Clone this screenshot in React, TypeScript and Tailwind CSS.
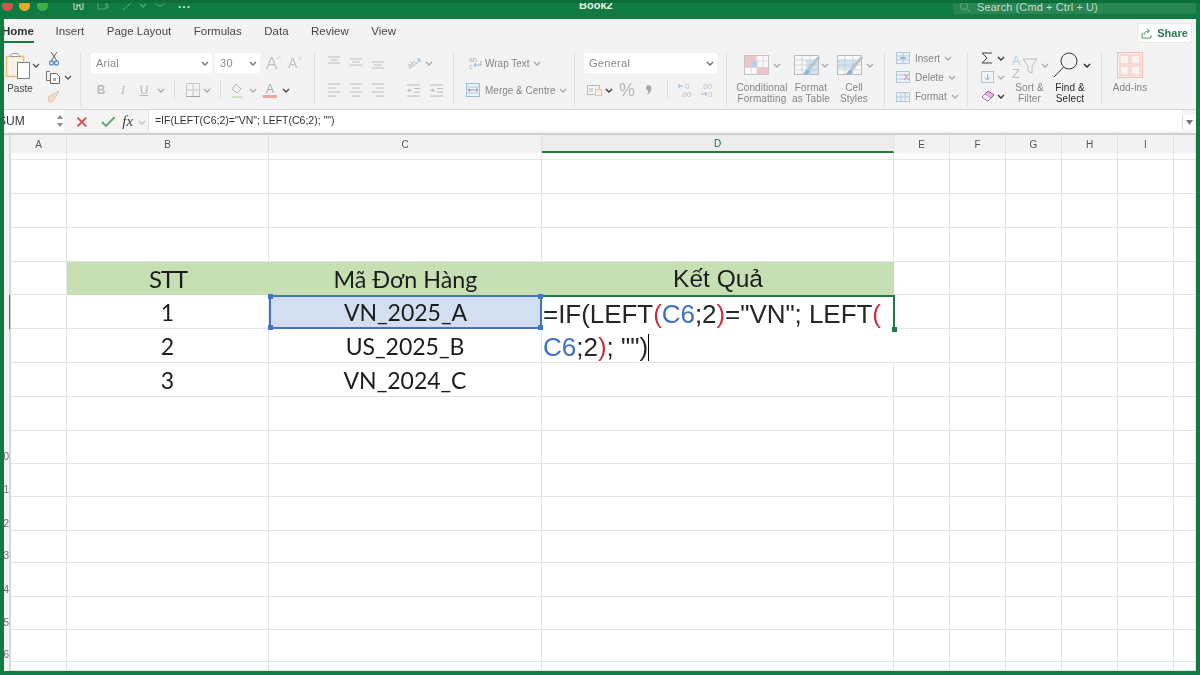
import React from "react";

const Chev = ({ c = "#a8a8a8", className = "" }: { c?: string; className?: string }) => (
  <svg width="8" height="5" viewBox="0 0 8 5" className={`shrink-0 ${className}`}>
    <path d="M1 1l3 3 3-3" fill="none" stroke={c} strokeWidth="1.3" />
  </svg>
);

const Sep = ({ className = "" }: { className?: string }) => <div className={`w-px h-[18px] bg-[#dcdcdc] ${className}`} />;

const Lines = ({ v, h }: { v: "t" | "m" | "b" | "n"; h: "l" | "c" | "r" }) => {
  const ys = v === "t" ? [1, 4, 7] : v === "m" ? [3, 6, 9] : v === "b" ? [6, 9, 12] : [1, 5, 9, 13];
  const xs: Record<string, [number, number][]> = {
    l: [[0, 12], [0, 8], [0, 12], [0, 8]],
    c: [[0, 12], [2, 10], [0, 12], [2, 10]],
    r: [[0, 12], [4, 12], [0, 12], [4, 12]],
  };
  return (
    <svg width="12" height="14" viewBox="0 0 12 14" className="shrink-0">
      {ys.map((y, i) => (
        <line key={i} x1={xs[h][i][0]} x2={xs[h][i][1]} y1={y} y2={y} stroke="#bcbcbc" strokeWidth="1" />
      ))}
    </svg>
  );
};

const Indent = ({ out }: { out?: boolean }) => (
  <svg width="13" height="13" viewBox="0 0 13 13" className="shrink-0">
    <path d="M0 1h13M7 4.500h6M7 8h6M0 12h13" stroke="#bcbcbc" strokeWidth="1" />
    <path d={out ? "M5 6.200H1M2.500 4.500L1 6.200 2.500 8" : "M0 6.200h4M2.500 4.500L4 6.200 2.500 8"} stroke="#9db8d4" strokeWidth="1" fill="none" />
  </svg>
);

const Label = ({ children, className = "" }: { children: React.ReactNode; className?: string }) => (
  <div className={`text-[10px] leading-[10.5px] tracking-[0.1px] text-center text-[#858585] whitespace-nowrap ${className}`}>{children}</div>
);

const TableIcon = ({ cell }: { cell?: boolean }) => (
  <svg width="26" height="21" viewBox="0 0 26 21" className="shrink-0">
    <rect x="0.500" y="0.500" width="24" height="19" fill="#fafafa" stroke="#b5bcc2" />
    {cell ? <rect x="1" y="5" width="18" height="9" fill="#cfe3f5" /> : <rect x="12" y="5" width="12" height="14" fill="#cfe3f5" />}
    <path d="M0 5h25M0 10h25M0 15h25M8 0v20M16 0v20" stroke="#c4c9cd" strokeWidth="0.800" />
    <path d="M25 2L14 15" stroke="#b9c3ca" strokeWidth="3" />
    <path d="M13 14l3 3-3 3-4-1z" fill="#8fb5d6" />
  </svg>
);

const TABS = ["Insert", "Page Layout", "Formulas", "Data", "Review", "View"];

const COLS = ["", "A", "B", "C", "D", "E", "F", "G", "H", "I", ""];
const ROW_H = [7, 34, 34, 34, 33, 34, 34, 34, 34, 33, 33, 34, 32, 34, 33, 32, 9];
const ROW_NO = ["", "", "", "", "", "", "", "", "", "10", "11", "12", "13", "14", "15", "16", ""];

const TABLE: Record<number, [string, string, string]> = {
  4: ["STT", "Mã Đơn Hàng", "Kết Quả"],
  5: ["1", "VN_2025_A", ""],
  6: ["2", "US_2025_B", ""],
  7: ["3", "VN_2024_C", ""],
};

const Handle = ({ className }: { className: string }) => (
  <span className={`absolute w-[5px] h-[5px] z-20 ${className}`} />
);

function Grid() {
  const cells: React.ReactNode[] = [];
  ROW_H.forEach((_, r) => {
    COLS.forEach((_, c) => {
      const key = `${r}-${c}`;
      if (r === 6 && c === 4) return;
      if (c === 0) {
        cells.push(
          <div key={key} className="relative bg-[#f5f5f5] border-r-2 border-[#d9d4da] flex items-end justify-end pb-[1px] text-[10px] leading-[12px] text-[#6e6e6e] font-['Liberation_Sans',sans-serif]">
            {ROW_NO[r]}
            {r === 5 && <span className="absolute right-[-1px] top-0 h-full w-[1.5px] bg-[#2f7a52]" />}
          </div>
        );
        return;
      }
      const base = "border-b border-r border-[#e4e4e4]";
      if (r === 4 && c >= 2 && c <= 4) {
        const kq = c === 4;
        cells.push(
          <div key={key} className={`bg-[#c6e0b4] flex items-center justify-center pt-[1px] text-[#1c1c1c] ${kq ? "font-['Liberation_Sans',sans-serif] text-[24.5px]" : c === 2 ? "font-['Lato',sans-serif] text-[24px] tracking-[-1.2px]" : "font-['Lato',sans-serif] text-[23.3px]"}`}>
            {TABLE[r][c - 2]}
          </div>
        );
        return;
      }
      if (r === 5 && c === 3) {
        cells.push(
          <div key={key} className="relative bg-[#d3dff1] border-2 border-[#4472c4] flex items-center justify-center pt-[1px] text-[23px] text-[#1c1c1c] font-['Lato',sans-serif]">
            {TABLE[r][1]}
            <Handle className="left-[-3px] top-[-3px] bg-[#4472c4]" />
            <Handle className="left-[-3px] bottom-[-3px] bg-[#4472c4]" />
            <Handle className="right-[-3px] top-[-3px] bg-[#4472c4]" />
            <Handle className="right-[-3px] bottom-[-3px] bg-[#4472c4]" />
          </div>
        );
        return;
      }
      if (r === 5 && c === 4) {
        cells.push(
          <div key={key} className="row-span-2 relative bg-white border-t-2 border-[#1f7a47] border-b border-b-[#e4e4e4] pt-[1px] pl-[1px] text-[26px] leading-[33px] text-[#262626] font-['Liberation_Sans',sans-serif] whitespace-nowrap z-10">
            <div className="h-[33px] tracking-[-0.05px]">
              =IF(LEFT<span className="text-[#c2343e]">(</span><span className="text-[#3f6fc4]">C6</span>;2<span className="text-[#c2343e]">)</span>="VN"; LEFT<span className="text-[#c2343e]">(</span>
            </div>
            <div className="flex h-[33px] items-center">
              <span>
                <span className="text-[#3f6fc4]">C6</span>;2<span className="text-[#c2343e]">)</span>; "")
              </span>
              <span className="w-px h-[27px] bg-black" />
            </div>
            <span className="absolute right-[-1px] top-[-2px] h-[35px] w-[2px] bg-[#1f7a47]" />
            <span className="absolute right-[-3px] top-[30px] w-[5px] h-[5px] bg-[#1f7a47]" />
          </div>
        );
        return;
      }
      const text = TABLE[r] && c >= 2 && c <= 4 ? TABLE[r][c - 2] : "";
      cells.push(
        <div key={key} className={`${base} flex items-center justify-center pt-[1px] text-[23px] text-[#1c1c1c] font-['Lato',sans-serif] bg-white`}>
          {text}
        </div>
      );
    });
  });
  return (
    <div className="grid grid-cols-[7px_56px_202px_273px_352px_56px_56px_56px_56px_56px_22px] grid-rows-[7px_34px_34px_34px_33px_34px_34px_34px_34px_33px_33px_34px_32px_34px_33px_32px_9px]">
      {cells}
    </div>
  );
}

export default function App() {
  return (
    <div className="w-[1200px] h-[675px] bg-[#0f7a41] flex flex-col overflow-hidden font-['Liberation_Sans',sans-serif]">
      {/* title bar */}
      <div className="h-[19px] shrink-0 flex items-start border-t-[3px] border-[#0b6e39] overflow-hidden">
        <div className="w-[579px] shrink-0 flex items-center -mt-[3px] h-[11px]">
          <div className="w-[73px] shrink-0 flex items-center gap-[6.5px] pl-[1.5px]">
            <span className="w-[11px] h-[11px] rounded-full bg-[#e0504d]" />
            <span className="w-[11px] h-[11px] rounded-full bg-[#e4ab2a]" />
            <span className="w-[11px] h-[11px] rounded-full bg-[#3fb049]" />
          </div>
          <svg width="14" height="10" viewBox="0 0 14 10"><path d="M1 1v6c0 2 3 2 3 0V3c0 2 3 2 3 0v4c0 2 3 2 3 0V1" fill="none" stroke="#b7d6c4" strokeWidth="1.200" /></svg>
          <svg width="12" height="9" viewBox="0 0 12 9" className="ml-[10px]"><path d="M1 1h8v7H1zM9 3h2v4H9" fill="none" stroke="#5fa57f" strokeWidth="1" /></svg>
          <svg width="12" height="10" viewBox="0 0 12 10" className="ml-[13px]"><path d="M1 9L10 1" stroke="#5fa57f" strokeWidth="1" /></svg>
          <Chev c="#5fa57f" className="ml-[5px]" />
          <svg width="12" height="9" viewBox="0 0 12 9" className="ml-[7px]"><path d="M1 0a5 5 0 0 0 10 0" fill="none" stroke="#5fa57f" strokeWidth="1" /></svg>
          <span className="ml-[12px] text-[12px] font-bold leading-[8px] -mt-[3px] text-[#cfe4d8] tracking-[1px]">...</span>
        </div>
        <div className="-mt-[3px] text-[11px] leading-[11px] font-bold text-[#e6f1ea]">Book2</div>
        <div className="ml-auto mr-[4px] -mt-[3px] w-[243px] h-[14px] rounded-b-[3px] bg-[#2a8555] flex items-center pl-[6px] gap-[5px] text-[11px] tracking-[0.1px] text-[#c4ddcf]">
          <svg width="12" height="11" viewBox="0 0 12 11"><circle cx="5" cy="4" r="3.500" fill="none" stroke="#6ea98a" /><path d="M8 7l3 3" stroke="#6ea98a" /></svg>
          <span className="ml-[1px]">Search (Cmd + Ctrl + U)</span>
        </div>
      </div>

      {/* main window */}
      <div className="flex-1 mx-[4px] mb-[4px] bg-white overflow-hidden flex flex-col blur-[0.3px]">
        {/* tabs */}
        <div className="h-[26px] shrink-0 bg-[#f3f3f3] flex items-center text-[11.5px] text-[#484848]">
          <div className="relative h-full -ml-[2px] flex items-center font-bold text-[#333]">
            Home
            <span className="absolute left-0 right-0 bottom-[2px] h-[2px] bg-[#107c41]" />
          </div>
          <div className="flex ml-[21.5px] gap-[22.5px]">
            {TABS.map((t) => (
              <span key={t}>{t}</span>
            ))}
          </div>
          <div className="ml-auto mr-[4px] mt-[2px] w-[55px] h-[20px] bg-white border border-[#e8e8e8] rounded-[2px] flex items-center justify-center gap-[5px] text-[11px] font-bold text-[#2b7d54]">
            <svg width="11" height="11" viewBox="0 0 11 11"><path d="M1 5v5h9V7M3 7c0-3 2-4 5-4M6 1l2.500 2L6 5" fill="none" stroke="#3f8a63" strokeWidth="0.900" /></svg>
            Share
          </div>
        </div>

        {/* ribbon */}
        <div className="h-[65px] shrink-0 bg-[#f3f3f3] border-b border-[#d6d6d6] pt-[7px] pb-[3px] flex">
          {/* clipboard */}
          <div className="w-[77px] shrink-0 border-r border-[#e0e0e0] flex">
            <div className="w-[38px] shrink-0">
              <svg width="38" height="27" viewBox="0 0 38 27">
                <path d="M2.500 4.500h17v20h-17z" fill="#fbf4e8" stroke="#edbd79" strokeWidth="1.500" />
                <path d="M6 4.500l2-3h6l2 3z" fill="#f8f8f8" stroke="#9d9d9d" />
                <rect x="13.500" y="10.500" width="12" height="16" fill="#fff" stroke="#7e7e7e" />
                <path d="M29 12l3 3 3-3" fill="none" stroke="#555" strokeWidth="1.300" />
              </svg>
              <div className="w-[32px] text-center text-[10px] leading-[10px] mt-[5px] text-[#444]">Paste</div>
            </div>
            <div className="flex flex-col pl-[4px]">
              <svg width="10" height="14" viewBox="0 0 10 14" className="ml-[3px]">
                <path d="M2 0l6 9M8 0L2 9" stroke="#626262" strokeWidth="1" />
                <circle cx="2.500" cy="11" r="2" fill="none" stroke="#5b8fc4" strokeWidth="1.300" />
                <circle cx="7.500" cy="11" r="2" fill="none" stroke="#5b8fc4" strokeWidth="1.300" />
              </svg>
              <div className="flex items-center mt-[5px]">
                <svg width="15" height="13" viewBox="0 0 15 13">
                  <path d="M4 .5H.5v9H4" fill="none" stroke="#777" />
                  <path d="M4.500 2.500h6l3 3v7h-9z" fill="#fff" stroke="#666" />
                  <rect x="7" y="7" width="3" height="3" fill="#aaa" />
                </svg>
                <Chev c="#555" className="ml-[3px]" />
              </div>
              <svg width="13" height="13" viewBox="0 0 13 13" className="ml-[1px] mt-[6px]">
                <path d="M1 7l5-3 3 3-4 5H2z" fill="#f6dcc7" stroke="#e9c3a8" />
                <path d="M7 4l4-3 1 1-3 4" fill="#e6e6e6" stroke="#c8c8c8" />
              </svg>
            </div>
          </div>

          {/* font */}
          <div className="w-[234px] shrink-0 border-r border-[#e0e0e0] pt-[1px]">
            <div className="flex items-center h-[20px]">
              <div className="ml-[10px] w-[121px] h-[20px] bg-white rounded-[3px] flex items-center justify-between pl-[5px] pr-[3px] text-[11px] tracking-[0.2px] text-[#8a8a8a]">
                Arial <Chev c="#777" />
              </div>
              <div className="ml-[3px] w-[45px] h-[20px] bg-white rounded-[3px] flex items-center justify-between pl-[5px] pr-[3px] text-[11px] tracking-[0.3px] text-[#8a8a8a]">
                30 <Chev c="#777" />
              </div>
              <span className="ml-[6px] text-[17px] leading-[17px] text-[#c4c4c4]">A</span>
              <span className="text-[8px] leading-[8px] -mt-[8px] text-[#c8c8c8]">^</span>
              <span className="ml-[7px] text-[14px] leading-[14px] text-[#c4c4c4]">A</span>
              <span className="text-[8px] leading-[8px] -mt-[8px] text-[#c8c8c8]">˅</span>
            </div>
            <div className="flex items-center h-[20px] mt-[7px] text-[12px] text-[#b8b8b8]">
              <span className="ml-[13px] w-[14px] text-center font-bold">B</span>
              <span className="ml-[8px] w-[14px] text-center italic font-['Liberation_Serif',serif]">I</span>
              <span className="ml-[7px] w-[14px] text-center underline">U</span>
              <Chev className="ml-[6px]" />
              <Sep className="ml-[9px]" />
              <svg width="14" height="14" viewBox="0 0 14 14" className="ml-[11px]">
                <path d="M.5.500h13v13H.500zM7 0v14M0 7h14" fill="none" stroke="#c8c8c8" />
                <path d="M0 13.500h14" stroke="#a6a6a6" />
              </svg>
              <Chev className="ml-[3px]" />
              <Sep className="ml-[9px]" />
              <svg width="14" height="15" viewBox="0 0 14 15" className="ml-[9px]">
                <path d="M6 1l5 5-4 4-5-4z" fill="none" stroke="#b8b8b8" />
                <path d="M2 14h10" stroke="#cde3c4" strokeWidth="2" />
              </svg>
              <Chev className="ml-[5px]" />
              <div className="ml-[6px] w-[14px] flex flex-col items-center leading-[12px] text-[#a8a8a8]">
                <span>A</span>
                <span className="w-[14px] h-[3px] bg-[#eba5a5]" />
              </div>
              <Chev c="#444" className="ml-[5px]" />
            </div>
          </div>

          {/* alignment */}
          <div className="w-[139px] shrink-0 border-r border-[#e0e0e0] pt-[1px]">
            <div className="flex items-center h-[20px] gap-[10px] pl-[13px]">
              <Lines v="t" h="c" />
              <Lines v="m" h="c" />
              <Lines v="b" h="c" />
              <svg width="14" height="14" viewBox="0 0 14 14" className="ml-[13px]">
                <text x="0" y="11" fontSize="8" fill="#b4b4b4" transform="rotate(-35 5 8)">ab</text>
                <path d="M9 8l4-5M10 3h3v3" fill="none" stroke="#9db8d4" />
              </svg>
              <Chev className="-ml-[6px]" />
            </div>
            <div className="flex items-center h-[20px] mt-[7px] gap-[10px] pl-[13px]">
              <Lines v="n" h="l" />
              <Lines v="n" h="c" />
              <Lines v="n" h="r" />
              <span className="ml-[13px]"><Indent out /></span>
              <Indent />
            </div>
          </div>

          {/* wrap */}
          <div className="w-[121px] shrink-0 border-r border-[#e0e0e0] pt-[1px] text-[10px] text-[#858585]">
            <div className="flex items-center h-[20px]">
              <svg width="14" height="14" viewBox="0 0 14 14" className="ml-[14px]">
                <text x="1" y="6" fontSize="7" fill="#b4b4b4">ab</text>
                <text x="1" y="13" fontSize="7" fill="#b4b4b4">c</text>
                <path d="M13 5v4H6M8 7L6 9l2 2" fill="none" stroke="#8eb4d8" />
              </svg>
              <span className="ml-[3px]">Wrap Text</span>
              <Chev className="ml-[3px]" />
            </div>
            <div className="flex items-center h-[20px] mt-[7px]">
              <svg width="14" height="14" viewBox="0 0 14 14" className="ml-[12px]">
                <rect x=".5" y=".5" width="13" height="13" fill="#eaf2f9" stroke="#9fbdd8" />
                <path d="M0 4h14M0 10h14" stroke="#b4c8da" />
                <path d="M2 7h10M4 5.500L2 7l2 1.500M10 5.500L12 7l-2 1.500" fill="none" stroke="#8a8a8a" strokeWidth="0.800" />
              </svg>
              <span className="ml-[5px]">Merge &amp; Centre</span>
              <Chev className="ml-[3px]" />
            </div>
          </div>

          {/* number */}
          <div className="w-[152px] shrink-0 border-r border-[#e0e0e0] pt-[1px]">
            <div className="ml-[9px] w-[133px] h-[20px] bg-white rounded-[3px] flex items-center justify-between pl-[5px] pr-[3px] text-[11px] tracking-[0.3px] text-[#8a8a8a]">
              General <Chev c="#666" />
            </div>
            <div className="flex items-center h-[20px] mt-[7px]">
              <svg width="15" height="12" viewBox="0 0 15 12" className="ml-[12px]">
                <rect x=".5" y="1.500" width="12" height="9" fill="#f4f4f4" stroke="#b8b8b8" />
                <rect x="8.500" y="5.500" width="6" height="6" fill="#fbeee2" stroke="#e8c7a3" />
                <path d="M3 4v4M5 4v4" stroke="#b8b8b8" />
              </svg>
              <Chev c="#333" className="ml-[3px]" />
              <span className="ml-[6px] w-[15px] text-center text-[18px] leading-[18px] text-[#b6b6b6]">%</span>
              <svg width="8" height="12" viewBox="0 0 8 12" className="ml-[11px]">
                <path d="M2 1.500c2.500-1 4.500.5 4.500 2.500 0 3-2 5.500-4.500 7 1-2 1.500-3.500 1-4.500-2 0-2.500-3.500-1-5z" fill="#a8a8a8" />
              </svg>
              <Sep className="ml-[14px]" />
              <svg width="14" height="16" viewBox="0 0 14 16" className="ml-[10px]">
                <text x="7" y="7" fontSize="8" fill="#b8c8d8">0</text>
                <text x="2" y="15" fontSize="8" fill="#bcbcbc">.00</text>
                <path d="M5 4H0M2 2L0 4l2 2" fill="none" stroke="#9dbbd8" />
              </svg>
              <svg width="14" height="16" viewBox="0 0 14 16" className="ml-[8px]">
                <text x="1" y="7" fontSize="8" fill="#bcbcbc">.00</text>
                <text x="8" y="15" fontSize="8" fill="#bcbcbc">0</text>
                <path d="M1 12h6M5 10l2 2-2 2" fill="none" stroke="#9dbbd8" />
              </svg>
            </div>
          </div>

          {/* styles */}
          <div className="w-[158px] shrink-0 border-r border-[#e0e0e0] pl-[8px] flex">
            <div className="w-[54px] shrink-0 pt-[3px]">
              <div className="flex items-center pl-[9px] h-[21px]">
                <svg width="25" height="21" viewBox="0 0 25 21" className="shrink-0">
                  <rect x=".5" y=".5" width="24" height="19" fill="#fafafa" stroke="#c2c6ca" />
                  <rect x="1" y="1" width="11" height="5" fill="#f4c2c7" />
                  <rect x="7" y="6" width="6" height="6" fill="#b6d0e8" />
                  <rect x="1" y="6" width="6" height="6" fill="#f4c2c7" />
                  <rect x="13" y="13" width="11" height="6" fill="#f4c2c7" />
                  <path d="M0 6h25M0 12.500h25M7 0v20M13 0v20M19 0v20" stroke="#d0d3d6" strokeWidth="0.800" />
                </svg>
                <Chev className="ml-[4px]" />
              </div>
              <Label className="mt-[7px]">Conditional<br />Formatting</Label>
            </div>
            <div className="w-[44px] shrink-0 pt-[3px]">
              <div className="flex items-center pl-[5px] h-[21px]">
                <TableIcon />
                <Chev className="ml-[1px]" />
              </div>
              <Label className="mt-[7px]">Format<br />as Table</Label>
            </div>
            <div className="w-[42px] shrink-0 pt-[3px]">
              <div className="flex items-center pl-[4px] h-[21px]">
                <TableIcon cell />
                <Chev className="ml-[3px]" />
              </div>
              <Label className="mt-[7px]">Cell<br />Styles</Label>
            </div>
          </div>

          {/* cells */}
          <div className="w-[83px] shrink-0 border-r border-[#e0e0e0] flex flex-col gap-[7px] pl-[11px] text-[10px] text-[#858585]">
            <div className="flex items-center h-[12px]">
              <svg width="14" height="12" viewBox="0 0 14 12"><rect x=".5" y=".5" width="13" height="11" fill="#eaf2f9" stroke="#b4c8da" /><path d="M0 4h14M0 8h14M7 0v12" stroke="#b4c8da" /><path d="M4 6h6" stroke="#7ba8d0" strokeWidth="1.500" /></svg>
              <span className="ml-[5px]">Insert</span>
              <Chev className="ml-[4px]" />
            </div>
            <div className="flex items-center h-[12px]">
              <svg width="14" height="12" viewBox="0 0 14 12"><rect x=".5" y=".5" width="13" height="11" fill="#eaf2f9" stroke="#b4c8da" /><path d="M0 4h14M0 8h14" stroke="#b4c8da" /><path d="M8 3l5 6M13 3L8 9" stroke="#e08a8a" /></svg>
              <span className="ml-[5px]">Delete</span>
              <Chev className="ml-[4px]" />
            </div>
            <div className="flex items-center h-[12px]">
              <svg width="14" height="12" viewBox="0 0 14 12"><rect x=".5" y="2.500" width="13" height="9" fill="#eaf2f9" stroke="#b4c8da" /><path d="M5 3v8M9 3v8M0 7h14" stroke="#b4c8da" /></svg>
              <span className="ml-[5px]">Format</span>
              <Chev className="ml-[4px]" />
            </div>
          </div>

          {/* editing */}
          <div className="w-[134px] shrink-0 border-r border-[#e0e0e0] flex">
            <div className="w-[42px] shrink-0 pl-[13px] flex flex-col gap-[7px]">
              <div className="flex items-center h-[12px]">
                <svg width="12" height="12" viewBox="0 0 12 12"><path d="M11 1H1l5 5-5 5h10" fill="none" stroke="#444" strokeWidth="1" /></svg>
                <Chev c="#333" className="ml-[4px]" />
              </div>
              <div className="flex items-center h-[12px]">
                <svg width="13" height="12" viewBox="0 0 13 12"><rect x=".5" y=".5" width="12" height="11" fill="#f2f6fa" stroke="#b8c4ce" /><path d="M6.500 3v6M4 6.500L6.500 9 9 6.500" fill="none" stroke="#8eb4d8" /></svg>
                <Chev className="ml-[3px]" />
              </div>
              <div className="flex items-center h-[12px]">
                <svg width="14" height="12" viewBox="0 0 14 12"><path d="M1 7l6-6 6 4-6 6z" fill="#e7b6e6" stroke="#a04fa6" /><path d="M1 7l3-3 6 4-3 3z" fill="#fff" stroke="#a04fa6" strokeWidth="0.600" /></svg>
                <Chev c="#333" className="ml-[2px]" />
              </div>
            </div>
            <div className="w-[39px] shrink-0 pt-[1px]">
              <div className="flex items-center h-[25px] pl-[2px]">
                <svg width="26" height="25" viewBox="0 0 26 25" className="shrink-0">
                  <text x="0" y="12" fontSize="13" fill="#b9cde0">A</text>
                  <text x="0" y="25" fontSize="13" fill="#c0c0c0">Z</text>
                  <path d="M11 6h14l-5 7v7l-4-2v-5z" fill="none" stroke="#bababa" />
                </svg>
                <Chev className="ml-[3px] shrink-0" />
              </div>
              <Label className="mt-[5px]">Sort &amp;<br />Filter</Label>
            </div>
            <div className="w-[42px] shrink-0">
              <div className="flex items-center h-[26px] pl-[4px]">
                <svg width="26" height="26" viewBox="0 0 26 26" className="shrink-0">
                  <circle cx="16" cy="9" r="8" fill="none" stroke="#333" strokeWidth="1" />
                  <path d="M10.500 15L1 25" stroke="#333" strokeWidth="1" />
                </svg>
                <Chev c="#222" className="ml-[4px]" />
              </div>
              <Label className="mt-[5px] !text-[#2a2a2a]">Find &amp;<br />Select</Label>
            </div>
          </div>

          {/* add-ins */}
          <div className="w-[56px] shrink-0 flex flex-col items-center">
            <svg width="26" height="26" viewBox="0 0 26 26">
              <rect x=".5" y=".5" width="25" height="25" fill="#fbeee9" stroke="#f1c3b8" />
              <rect x="3" y="3" width="9" height="9" fill="#f8f4f2" stroke="#f1c3b8" />
              <rect x="14" y="3" width="9" height="9" fill="#f8f4f2" stroke="#f1c3b8" />
              <rect x="3" y="14" width="9" height="9" fill="#f8f4f2" stroke="#f1c3b8" />
              <rect x="14" y="14" width="9" height="9" fill="#f8f4f2" stroke="#f1c3b8" />
            </svg>
            <Label className="mt-[5px]">Add-ins</Label>
          </div>
        </div>

        {/* formula bar */}
        <div className="h-[25px] shrink-0 bg-[#f4f4f4] border-b-2 border-[#cfcfcf] flex items-start">
          <div className="w-[60px] h-[21px] shrink-0 bg-white flex items-center justify-between pr-[1px] text-[12px] text-[#333] overflow-hidden">
            <span className="-ml-[6px]">SUM</span>
            <svg width="6" height="14" viewBox="0 0 6 14"><path d="M3 1l3 4H0zM3 13l3-4H0z" fill="#8a8a8a" /></svg>
          </div>
          <svg width="12" height="12" viewBox="0 0 12 12" className="ml-[12px] mt-[6px]">
            <path d="M1.500 1.500l9 9M10.500 1.500l-9 9" stroke="#d84a56" strokeWidth="2" />
          </svg>
          <svg width="15" height="12" viewBox="0 0 15 12" className="ml-[13px] mt-[6px]">
            <path d="M1 6l4 4 9-9" fill="none" stroke="#62a766" strokeWidth="2" />
          </svg>
          <span className="ml-[7px] mt-[4px] w-[12px] text-[15px] leading-[15px] italic text-[#444] font-['Liberation_Serif',serif]">fx</span>
          <Chev c="#c4c4c4" className="ml-[4px] mt-[10px]" />
          <div className="ml-[2px] w-[1034px] h-[21px] bg-white border-l border-[#e2e2e2] flex items-center pl-[6px] text-[10.5px] text-[#333] shrink-0">
            =IF(LEFT(C6;2)="VN"; LEFT(C6;2); "")
          </div>
          <div className="w-[14px] h-[15px] mt-[5px] bg-white border-l border-[#dcdcdc] flex items-center justify-center shrink-0">
            <svg width="7" height="5" viewBox="0 0 7 5"><path d="M0 0h7L3.500 5z" fill="#777" /></svg>
          </div>
        </div>

        {/* column headers */}
        <div className="h-[18px] shrink-0 grid grid-cols-[7px_56px_202px_273px_352px_56px_56px_56px_56px_56px_22px] text-[10px] text-[#555] bg-[#f2f2f2]">
          {COLS.map((c, i) => (
            <div key={i} className={`flex items-center justify-center border-r border-[#e0e0e0] ${i === 0 ? "border-r-2 border-[#d9d4da]" : ""} ${c === "D" ? "border-b-2 border-b-[#1f7a47] bg-[#ececec] text-[#1f6b43]" : ""}`}>
              {c}
            </div>
          ))}
        </div>

        <Grid />
      </div>
    </div>
  );
}
